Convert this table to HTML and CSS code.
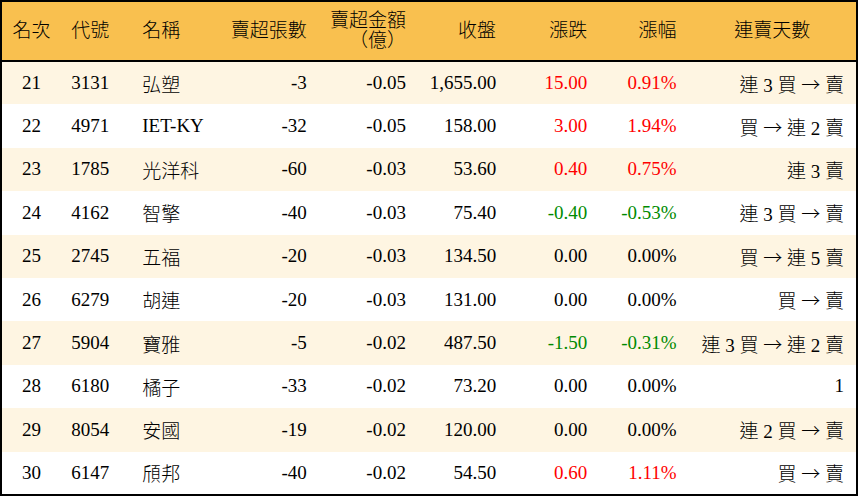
FILE: index.html
```html
<!DOCTYPE html>
<html lang="zh-Hant">
<head>
<meta charset="utf-8">
<link rel="stylesheet" href="styles.css">
</head>
<body>
<table class="grid">
  <colgroup>
    <col class="c-rank"><col class="c-code"><col class="c-name"><col class="c-vol"><col class="c-amt"><col class="c-close"><col class="c-chg"><col class="c-pct"><col class="c-days">
  </colgroup>
  <thead>
    <tr>
      <th class="ctr">名次</th>
      <th class="lft">代號</th>
      <th class="lft">名稱</th>
      <th>賣超張數</th>
      <th class="two">賣超金額<br>（億）</th>
      <th>收盤</th>
      <th>漲跌</th>
      <th>漲幅</th>
      <th class="ctr">連賣天數</th>
    </tr>
  </thead>
  <tbody>
    <tr class="alt"><td class="ctr">21</td><td class="lft">3131</td><td class="lft">弘塑</td><td>-3</td><td>-0.05</td><td>1,655.00</td><td class="up">15.00</td><td class="up">0.91%</td><td>連 3 買 <span class="arr">→</span> 賣</td></tr>
    <tr><td class="ctr">22</td><td class="lft">4971</td><td class="lft">IET-KY</td><td>-32</td><td>-0.05</td><td>158.00</td><td class="up">3.00</td><td class="up">1.94%</td><td>買 <span class="arr">→</span> 連 2 賣</td></tr>
    <tr class="alt"><td class="ctr">23</td><td class="lft">1785</td><td class="lft">光洋科</td><td>-60</td><td>-0.03</td><td>53.60</td><td class="up">0.40</td><td class="up">0.75%</td><td>連 3 賣</td></tr>
    <tr><td class="ctr">24</td><td class="lft">4162</td><td class="lft">智擎</td><td>-40</td><td>-0.03</td><td>75.40</td><td class="down">-0.40</td><td class="down">-0.53%</td><td>連 3 買 <span class="arr">→</span> 賣</td></tr>
    <tr class="alt"><td class="ctr">25</td><td class="lft">2745</td><td class="lft">五福</td><td>-20</td><td>-0.03</td><td>134.50</td><td>0.00</td><td>0.00%</td><td>買 <span class="arr">→</span> 連 5 賣</td></tr>
    <tr><td class="ctr">26</td><td class="lft">6279</td><td class="lft">胡連</td><td>-20</td><td>-0.03</td><td>131.00</td><td>0.00</td><td>0.00%</td><td>買 <span class="arr">→</span> 賣</td></tr>
    <tr class="alt"><td class="ctr">27</td><td class="lft">5904</td><td class="lft">寶雅</td><td>-5</td><td>-0.02</td><td>487.50</td><td class="down">-1.50</td><td class="down">-0.31%</td><td>連 3 買 <span class="arr">→</span> 連 2 賣</td></tr>
    <tr><td class="ctr">28</td><td class="lft">6180</td><td class="lft">橘子</td><td>-33</td><td>-0.02</td><td>73.20</td><td>0.00</td><td>0.00%</td><td>1</td></tr>
    <tr class="alt"><td class="ctr">29</td><td class="lft">8054</td><td class="lft">安國</td><td>-19</td><td>-0.02</td><td>120.00</td><td>0.00</td><td>0.00%</td><td>連 2 買 <span class="arr">→</span> 賣</td></tr>
    <tr><td class="ctr">30</td><td class="lft">6147</td><td class="lft">頎邦</td><td>-40</td><td>-0.02</td><td>54.50</td><td class="up">0.60</td><td class="up">1.11%</td><td>買 <span class="arr">→</span> 賣</td></tr>
  </tbody>
</table>
</body>
</html>
```

FILE: styles.css
```css
html, body {
  margin: 0;
  padding: 0;
  background: #ffffff;
}

.grid {
  width: 858px;
  height: 496px;
  table-layout: fixed;
  border-collapse: collapse;
  border: 2px solid #000000;
  font-family: "Liberation Serif", "Noto Sans CJK TC", serif;
  font-size: 19px;
  font-weight: 300;
  color: #000000;
}

.c-rank { width: 60px; }
.c-code { width: 71px; }
.c-name { width: 82px; }
.c-vol { width: 104px; }
.c-amt { width: 99px; }
.c-close { width: 90px; }
.c-chg { width: 91px; }
.c-pct { width: 89px; }
.c-days { width: 168px; }

.grid thead tr {
  height: 60px;
  background: #f9c04f;
  border-bottom: 2px solid #000000;
}

.grid th {
  font-weight: 300;
  text-align: right;
  padding: 0 12px 0 0;
  line-height: 20px;
  white-space: nowrap;
}

.grid tbody tr {
  height: 43px;
}

.grid tbody tr.alt {
  background: #fef5e2;
}

.grid td {
  text-align: right;
  padding: 0 12px 0 0;
  white-space: nowrap;
}

.grid .ctr {
  text-align: center;
  padding: 0;
}

.grid .lft {
  text-align: left;
  padding: 0 0 0 10px;
}

.arr {
  font-family: "Noto Sans CJK TC", sans-serif;
  font-weight: 300;
}

.up { color: #ff0000; }
.down { color: #008a00; }
```
